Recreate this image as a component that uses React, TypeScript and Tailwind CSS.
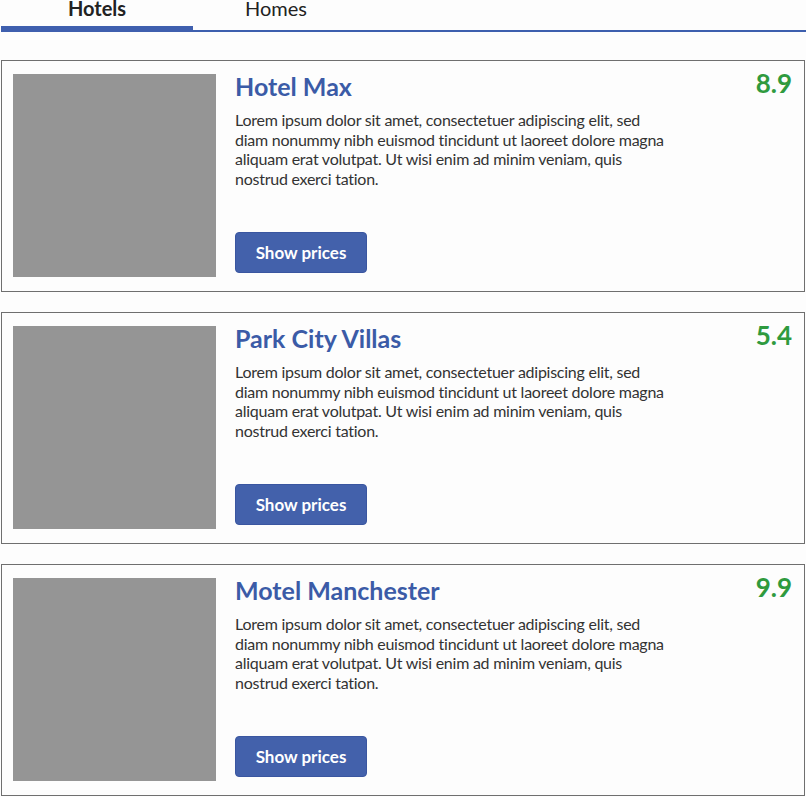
import React from "react";

const hotels = [
  { name: "Hotel Max", score: "8.9" },
  { name: "Park City Villas", score: "5.4" },
  { name: "Motel Manchester", score: "9.9" },
];

const lorem =
  "Lorem ipsum dolor sit amet, consectetuer adipiscing elit, sed diam nonummy nibh euismod tincidunt ut laoreet dolore magna aliquam erat volutpat. Ut wisi enim ad minim veniam, quis nostrud exerci tation.";

function Card({ name, score }: { name: string; score: string }) {
  return (
    <div className="flex border border-[#6f6f6f] bg-[#fdfdfd] pl-[11px] pt-[13px] pb-[14px] pr-[12px] h-[232px]">
      <div className="w-[203px] h-[203px] bg-[#959595] shrink-0" />
      <div className="flex flex-col ml-[19px] flex-1">
        <div className="flex justify-between items-start -mt-[3px]">
          <h2 className="text-[25px] leading-[30px] font-bold text-[#3b5ba7]">{name}</h2>
          <span className="text-[26px] leading-[30px] font-bold text-[#2f9a3e] -mt-[3px]">{score}</span>
        </div>
        <p className="mt-[9px] w-[440px] text-[16px] leading-[19.5px] tracking-[-0.25px] text-[#333333]">{lorem}</p>
        <div className="mt-auto">
          <button className="w-[132px] h-[41px] rounded-[4px] bg-[#4361ab] border border-[#3a56a0] text-white font-bold text-[17px] mb-[4px]">
            Show prices
          </button>
        </div>
      </div>
    </div>
  );
}

export default function App() {
  return (
    <div className="bg-[#fdfdfd] min-h-[797px] w-[806px]" style={{ fontFamily: "Lato, 'Noto Sans', sans-serif" }}>
      <div className="flex items-end h-[32px] border-b-2 border-[#3d5fae] ml-[1px]">
        <div className="w-[192px] h-[32px] -mb-[2px] border-b-[6px] border-[#3f5fae] text-center text-[20px] leading-[17px] font-bold text-[#222]">
          Hotels
        </div>
        <div className="w-[166px] h-[30px] text-center text-[20px] leading-[17px] text-[#222]">Homes</div>
      </div>
      <div className="flex flex-col gap-[20px] mt-[28px] mx-[1px]">
        {hotels.map((h) => (
          <Card key={h.name} name={h.name} score={h.score} />
        ))}
      </div>
    </div>
  );
}
